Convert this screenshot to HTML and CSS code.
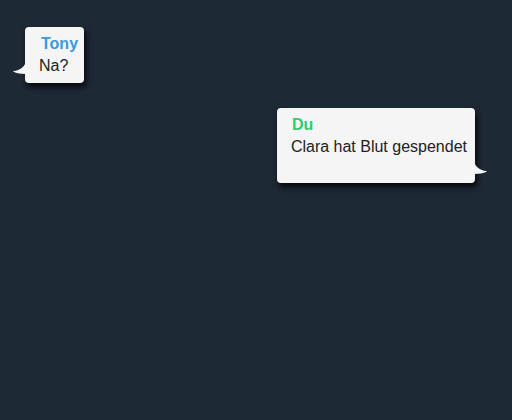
FILE: index.html
```html
<!DOCTYPE html>
<html lang="de">
<head>
<meta charset="utf-8">
<title>Chat</title>
<link rel="stylesheet" href="styles.css">
</head>
<body>
<main class="chat">
  <div class="bubble bubble-left">
    <div class="name name-tony">Tony</div>
    <div class="text">Na?</div>
    <svg class="tail tail-left" width="12" height="10" viewBox="0 0 12 10"><path d="M12 0 C10 4 6 6.5 1 7 L0 7.6 C4 9.6 8 10 12 10 Z" fill="#f5f5f5"/></svg>
  </div>
  <div class="bubble bubble-right">
    <div class="name name-du">Du</div>
    <div class="text">Clara hat Blut gespendet</div>
    <svg class="tail tail-right" width="12" height="10" viewBox="0 0 12 10"><path d="M0 0 C2 4 6 6.5 11 7 L12 7.6 C8 9.6 4 10 0 10 Z" fill="#f5f5f5"/></svg>
  </div>
</main>
</body>
</html>
```

FILE: styles.css
```css
html, body {
  margin: 0;
  padding: 0;
  background: #1e2936;
  height: 100%;
}

.chat {
  display: flex;
  flex-direction: column;
  padding: 27px 37px 0 25px;
  gap: 25px;
  font-family: "Liberation Sans", Arial, sans-serif;
  font-size: 16px;
  line-height: 22px;
  color: #222;
}

.bubble {
  position: relative;
  background: #f5f5f5;
  border-radius: 4px;
  box-shadow: 2px 4px 6px rgba(0, 0, 0, 0.85);
  padding: 6px 8px 6px 14px;
}

.bubble-left {
  align-self: flex-start;
  padding-right: 6px;
}

.bubble-right {
  align-self: flex-end;
  padding-bottom: 25px;
}

.name {
  font-weight: bold;
  padding-left: 2px;
}

.name-tony { color: #3b99e0; }
.name-du { color: #2ecc71; padding-left: 1px; }

.tail {
  position: absolute;
  bottom: 9px;
  display: block;
}

.tail-left { left: -12px; }
.tail-right { right: -12px; }
```
